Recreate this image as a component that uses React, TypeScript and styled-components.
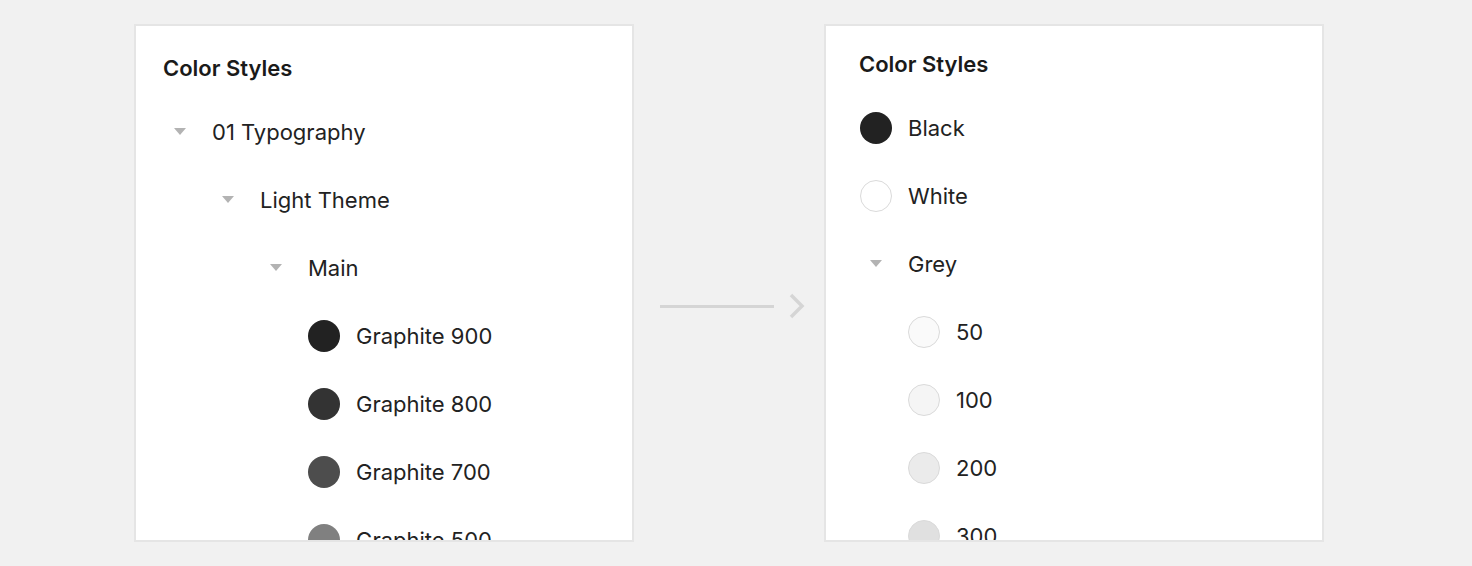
import React from "react";
import styled, { createGlobalStyle } from "styled-components";

const GlobalStyle = createGlobalStyle`
  html, body {
    margin: 0;
    padding: 0;
    background: #f1f1f1;
  }
  body {
    font-family: "Inter", "Liberation Sans", sans-serif;
    color: #222222;
  }
`;

type Item = {
  label: string;
  level: number;
  swatch?: string;
  outlined?: boolean;
};

const leftItems: Item[] = [
  { label: "01 Typography", level: 0 },
  { label: "Light Theme", level: 1 },
  { label: "Main", level: 2 },
  { label: "Graphite 900", level: 3, swatch: "#222222" },
  { label: "Graphite 800", level: 3, swatch: "#333333" },
  { label: "Graphite 700", level: 3, swatch: "#4d4d4d" },
  { label: "Graphite 500", level: 3, swatch: "#808080" },
];

const rightItems: Item[] = [
  { label: "Black", level: 0, swatch: "#222222" },
  { label: "White", level: 0, swatch: "#ffffff", outlined: true },
  { label: "Grey", level: 0 },
  { label: "50", level: 1, swatch: "#fafafa", outlined: true },
  { label: "100", level: 1, swatch: "#f5f5f5", outlined: true },
  { label: "200", level: 1, swatch: "#ebebeb", outlined: true },
  { label: "300", level: 1, swatch: "#e0e0e0", outlined: true },
];

const Page = styled.div`
  display: flex;
  align-items: flex-start;
  padding: 24px 0 0 134px;
  height: 566px;
  box-sizing: border-box;
  overflow: hidden;
`;

const Panel = styled.div<{ $padLeft: number; $padTop: number }>`
  width: 500px;
  height: 518px;
  flex-shrink: 0;
  box-sizing: border-box;
  background: #ffffff;
  border: 2px solid #e5e5e5;
  overflow: hidden;
  padding: ${({ $padTop }) => $padTop}px 0 0 ${({ $padLeft }) => $padLeft}px;
`;

const Title = styled.div`
  height: 60px;
  line-height: 60px;
  font-size: 22px;
  font-weight: 600;
  color: #1a1a1a;
  margin-left: -1px;
`;

const Row = styled.div<{ $level: number }>`
  display: flex;
  align-items: center;
  gap: 16px;
  height: 68px;
  padding-left: ${({ $level }) => $level * 48}px;
  font-size: 22px;
  color: #222222;
  white-space: nowrap;
`;

const Slot = styled.div`
  width: 32px;
  height: 32px;
  display: flex;
  align-items: center;
  justify-content: center;
  flex-shrink: 0;
`;

const Swatch = styled.div<{ $color: string; $outlined?: boolean }>`
  width: 32px;
  height: 32px;
  border-radius: 50%;
  box-sizing: border-box;
  background: ${({ $color }) => $color};
  border: ${({ $outlined }) => ($outlined ? "1px solid #dadada" : "none")};
`;

const Connector = styled.div`
  width: 190px;
  flex-shrink: 0;
  display: flex;
  align-items: center;
  gap: 15px;
  padding: 269px 0 0 26px;
  box-sizing: border-box;
`;

const Line = styled.div`
  width: 114px;
  height: 3px;
  background: #d5d5d5;
`;

const Caret = () => (
  <svg width="12" height="12" viewBox="0 0 12 12">
    <path d="M0 2 L12 2 L6 9 Z" fill="#b3b3b3" />
  </svg>
);

const Chevron = () => (
  <svg width="16" height="26" viewBox="0 0 16 26">
    <path
      d="M2 2 L13 13 L2 24"
      fill="none"
      stroke="#d5d5d5"
      strokeWidth="3.5"
    />
  </svg>
);

const Tree = ({ items }: { items: Item[] }) => (
  <>
    {items.map((item) => (
      <Row key={item.label} $level={item.level}>
        <Slot>
          {item.swatch ? (
            <Swatch $color={item.swatch} $outlined={item.outlined} />
          ) : (
            <Caret />
          )}
        </Slot>
        <span>{item.label}</span>
      </Row>
    ))}
  </>
);

export default function App() {
  return (
    <>
      <GlobalStyle />
      <Page>
        <Panel $padLeft={28} $padTop={12}>
          <Title>Color Styles</Title>
          <Tree items={leftItems} />
        </Panel>
        <Connector>
          <Line />
          <Chevron />
        </Connector>
        <Panel $padLeft={34} $padTop={8}>
          <Title>Color Styles</Title>
          <Tree items={rightItems} />
        </Panel>
      </Page>
    </>
  );
}
